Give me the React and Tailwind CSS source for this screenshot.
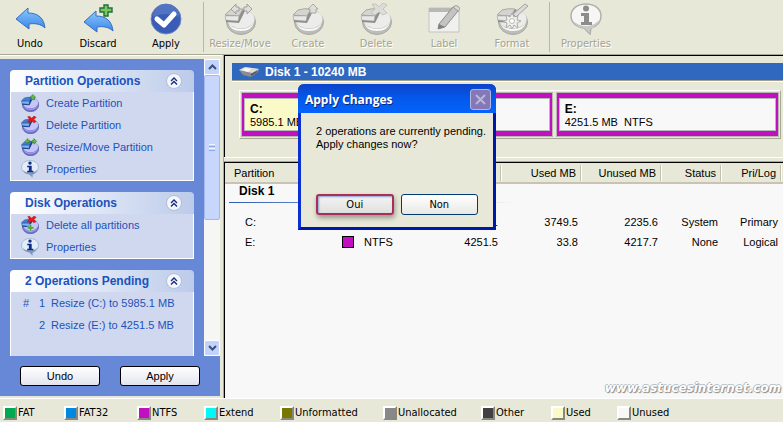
import React, { useState } from "react";

const PieIcon = ({ size, muted, children }) => {
  const c = muted
    ? { top: "#ececea", side: "#bcbcb8", slice: "#d4d4d0", band: "#e8e8e6", edge: "#8e8e8a", line: "#a8a8a4", shine: "#fafaf8" }
    : { top: "#c4c6f8", side: "#7472d0", slice: "#3484dc", band: "#74b8f4", edge: "#203c8c", line: "#4a4a90", shine: "#a8a8f0" };
  return (
    <svg width={size} height={size} viewBox="0 0 32 32" aria-hidden="true">
      <ellipse cx="17" cy="19" rx="14.5" ry="12.5" fill={c.side} stroke={c.line} />
      <ellipse cx="17" cy="16" rx="13.5" ry="9.500" fill={c.top} />
      <path d="M4 19 Q7 26 17 26 Q27 26 30 19 Q28 28 17 28 Q6 28 4 19 Z" fill={c.shine} />
      <path d="M1 13 L2 19 L15 20 L21 8 L19 6 Z" fill={c.edge} />
      <path d="M1 12 L6 7 Q12 5 19 6 L15 13 Z" fill={c.slice} stroke={c.line} />
      <path d="M1 13 L15 13 L14 18 L2 17 Z" fill={c.band} stroke={c.line} strokeWidth="0.5" />
      {children}
    </svg>
  );
};

const InfoIcon = ({ size, muted }) => (
  <svg width={size} height={size} viewBox="0 0 32 32" aria-hidden="true">
    <path
      d="M16 1 C25 1 31 6 31 13 C31 19 27 23 21 25 L20 31 L14 25 C6 24 1 19 1 13 C1 6 7 1 16 1 Z"
      fill={muted ? "#f6f6f4" : "#e2edf8"}
      stroke={muted ? "#b0b0ac" : "#9cb4d0"}
      strokeWidth="1.5"
    />
    <path d="M3 18 Q9 23 16 23 Q24 23 29 17 Q26 25 20 26 L20 30 L14 25 Q6 24 3 18 Z" fill={muted ? "#c8c8c4" : "#7c98bc"} />
    <circle cx="16" cy="5.500" r="3" fill={muted ? "#8c8c8a" : "#102c84"} />
    <path d="M11 10 H19 V19 H22 V22 H11 V19 H14 V13 H11 Z" fill={muted ? "#8c8c8a" : "#102c84"} />
  </svg>
);

const Cross = ({ muted }) => (
  <path
    d="M12 1 L16 1 L19 4 L23 0 L27 2 L23 6 L27 10 L23 12 L19 9 L15 12 L11 10 L15 6 Z"
    fill={muted ? "#dcdcd8" : "#e81818"}
    stroke={muted ? "#bcbcb8" : "#b01010"}
    strokeWidth="0.8"
  />
);

const UpArrow = ({ muted }) => (
  <path d="M21 1 L26 6 H24 V10 H18 V6 H16 Z" fill={muted ? "#dededa" : "#62b848"} stroke={muted ? "#a8a8a4" : "#2c7020"} />
);

const SideArrows = ({ muted }) => (
  <g fill={muted ? "#dededa" : "#62b848"} stroke={muted ? "#a0a09c" : "#2c7020"}>
    <path d="M7 6 L12 1 V4 H15 V8 H12 V11 Z" />
    <path d="M28 6 L23 1 V4 H20 V8 H23 V11 Z" />
  </g>
);

const BackArrow = ({ plus }) => (
  <svg width="32" height="32" viewBox="0 0 32 32" aria-hidden="true">
    <defs>
      <linearGradient id="back" x1="0" y1="0" x2="0" y2="1">
        <stop offset="0" stopColor="#8cc8fc" />
        <stop offset="1" stopColor="#3a86e8" />
      </linearGradient>
    </defs>
    <path
      d="M2 16 L14 5 V10 C24 10 30 15 31 25 C27 21 21 20 15 21 V26 Z"
      fill="url(#back)"
      stroke="#3a6cc4"
      strokeLinejoin="round"
      transform={plus ? "translate(0 3)" : undefined}
    />
    {plus && (
      <path d="M22 2 H26 V5 H30 V9 H26 V13 H22 V9 H18 V5 H22 Z" fill="#7cc858" stroke="#1c7040" strokeWidth="1.4" />
    )}
  </svg>
);

const CheckIcon = () => (
  <svg width="32" height="32" viewBox="0 0 32 32" aria-hidden="true">
    <circle cx="16" cy="16" r="15" fill="#3a5cb4" stroke="#7088c8" />
    <path d="M3 14 A13 13 0 0 1 29 14 Q16 8 3 14 Z" fill="#5272c4" />
    <path d="M7 16 L14 22 L24 11" fill="none" stroke="#fff" strokeWidth="5" strokeLinecap="round" strokeLinejoin="round" />
  </svg>
);

const LabelIcon = () => (
  <svg width="32" height="32" viewBox="0 0 32 32" aria-hidden="true">
    <path d="M1 5 H31 V29 H1 Z" fill="#f0f0ee" stroke="#c4c4c0" />
    <path d="M1 5 H31 V9 H1 Z" fill="#b8b8b4" />
    <path d="M11 21 L25 4 L30 8 L17 24 L10 26 Z" fill="#c4c4c0" stroke="#8c8c88" />
    <path d="M25 4 Q28 1 31 4 Q33 7 30 8 Z" fill="#d8d8d4" stroke="#a4a4a0" />
    <path d="M11 21 L17 24 L10 26 Z" fill="#80807c" />
  </svg>
);

const FormatIcon = () => (
  <PieIcon size={32} muted>
    <path
      d="M16 10 L18 14 L22 12 L21 17 L25 18 L21 20 L22 25 L18 22 L16 26 L14 22 L10 25 L11 20 L7 18 L11 17 L10 12 L14 14 Z"
      fill="#f0f0ec"
      stroke="#acaca8"
    />
    <circle cx="16" cy="18" r="2.500" fill="#fff" stroke="#b8b8b4" />
    <path d="M17 11 L29 1 L32 3 L20 14 Z" fill="#dadad6" stroke="#a4a4a0" />
  </PieIcon>
);

const DriveIcon = () => (
  <svg width="20" height="12" viewBox="0 0 20 12" aria-hidden="true">
    <path d="M0 4 L6 1 L20 3 L19 6 L12 11 L4 9 Z" fill="#8c8c8c" />
    <path d="M0 4 L6 1 L20 3 L13 7 Z" fill="#dcdcdc" />
    <path d="M3 4 L7 2 L12 3 L9 6 Z" fill="#f8f8f8" />
    <path d="M12 8 L18 5 V6 L12 10 Z" fill="#505050" />
  </svg>
);

const ToolButton = ({ icon, label, disabled }) => (
  <button
    type="button"
    disabled={disabled}
    className={`flex w-17 shrink-0 flex-col items-center pt-[3px] font-['DejaVu_Sans_Condensed','DejaVu_Sans',sans-serif] text-[11px] leading-[18px] ${
      disabled ? "text-[#a4a490] [text-shadow:1px_1px_0_#fff]" : "text-black"
    }`}
  >
    {icon}
    <span className="whitespace-nowrap">{label}</span>
  </button>
);

const ToolSeparator = () => (
  <div className="flex w-1.5 shrink-0 justify-center py-0.5">
    <div className="w-px bg-[#b8b8a6]" />
  </div>
);

const TaskPanel = ({ title, children, grow }) => {
  const [open, setOpen] = useState(true);
  return (
    <section className={`shrink-0 ${grow ? "min-h-32" : ""}`}>
      <header className="flex h-[22px] items-center justify-between rounded-t-sm bg-linear-to-r from-white to-[#bccbea] pr-3 pl-[15px]">
        <h2 className="text-[12px] font-bold whitespace-nowrap text-[#1c52bc]">{title}</h2>
        <button
          type="button"
          aria-label={`Toggle ${title}`}
          aria-expanded={open}
          onClick={() => setOpen(!open)}
          className="flex size-4 items-center justify-center rounded-full border border-[#b0bedc] bg-[#f4f6fb]"
        >
          <svg width="8" height="8" viewBox="0 0 8 8" fill="none" stroke="#102880" strokeWidth="1.3">
            <path d="M1 4 L4 1 L7 4 M1 7.500 L4 4.500 L7 7.500" />
          </svg>
        </button>
      </header>
      {open && <div className={`border border-t-0 border-white bg-[#d0d8ef] ${grow ? "min-h-28" : ""}`}>{children}</div>}
    </section>
  );
};

const TaskLink = ({ icon, label }) => (
  <li>
    <a href="#" className="flex h-[22px] items-center gap-[7px] pl-2.5 text-[#1c52bc]">
      {icon}
      {label}
    </a>
  </li>
);

const PendingRow = ({ mark, number, label }) => (
  <li className="flex h-[22px] items-center pl-3 text-[#1c52bc]">
    <span className="w-4">{mark}</span>
    <span className="w-3">{number}</span>
    {label}
  </li>
);

const ScrollButton = ({ label, path }) => (
  <button
    type="button"
    aria-label={label}
    className="flex h-4 w-full shrink-0 items-center justify-center rounded-xs border border-white bg-[#c2d3fc]"
  >
    <svg width="9" height="6" viewBox="0 0 9 6" fill="none" stroke="#3c5078" strokeWidth="2">
      <path d={path} />
    </svg>
  </button>
);

const SideButton = ({ label }) => (
  <button
    type="button"
    className="h-5 w-20 rounded-[3px] border border-black bg-linear-to-b from-white to-[#e4e4ee] text-[11px] leading-4 text-black"
  >
    {label}
  </button>
);

const PartitionBox = ({ letter, details, className, used }) => (
  <div className={`border border-[#b8b8b0] ${className}`}>
    <div className="h-[43px] border-2 border-y-[5px] border-[#c010c0]">
      <div className="flex h-full border border-[#b8b8b8] bg-[#f8f8f8]">
        <div className={`px-[5px] pt-1 leading-[13px] whitespace-nowrap ${used ? "w-2/3 bg-[#fafac8]" : ""}`}>
          <div className="text-[12px] font-bold">{letter}</div>
          <div className="text-[11px]">{details}</div>
        </div>
      </div>
    </div>
  </div>
);

const columns = ["Partition", "Type", "Size MB", "Used MB", "Unused MB", "Status", "Pri/Log"];

const partitions = [
  { name: "C:", type: "NTFS", values: ["5985.1", "3749.5", "2235.6", "System", "Primary"] },
  { name: "E:", type: "NTFS", values: ["4251.5", "33.8", "4217.7", "None", "Logical"] },
];

const PartitionTable = () => (
  <table className="w-full table-fixed border-collapse text-[11px] leading-4">
    <colgroup>
      <col className="w-[110px]" />
      <col className="w-[87px]" />
      <col className="w-20" />
      <col className="w-20" />
      <col className="w-20" />
      <col className="w-15" />
      <col className="w-15" />
      <col />
    </colgroup>
    <thead>
      <tr className="h-5 border-b-2 border-[#cbc3b2] bg-[#e8e8d8]">
        {columns.map((name, i) => (
          <th key={name} className="p-0 font-normal">
            <div
              className={`mr-px border-r border-[#c0c0b0] whitespace-nowrap shadow-[1px_0_0_#fff] ${
                i < 2 ? "pl-[9px] text-left" : "pr-1 text-right"
              }`}
            >
              {name}
            </div>
          </th>
        ))}
        <th />
      </tr>
    </thead>
    <tbody>
      <tr>
        <th colSpan={8} className="p-0 pb-[9px] pl-1 text-left">
          <div className="pb-1 pl-2.5 text-[12px] leading-[14px]">Disk 1</div>
          <div className="h-px w-72 bg-linear-to-r from-[#2c5cb0] to-[#f8f8f8]" />
        </th>
      </tr>
      {partitions.map((p) => (
        <tr key={p.name} className="h-5">
          <td className="p-0 pl-5">{p.name}</td>
          <td className="p-0 pl-[7px]">
            <span className="flex items-center gap-2.5">
              <span className="size-3 border border-black bg-[#c010c0]" />
              {p.type}
            </span>
          </td>
          {p.values.map((value, i) => (
            <td key={i} className="p-0 pr-1 text-right">
              {value}
            </td>
          ))}
          <td />
        </tr>
      ))}
    </tbody>
  </table>
);

const legend = [
  { label: "FAT", color: "bg-[#00a850]" },
  { label: "FAT32", color: "bg-[#0088e0]" },
  { label: "NTFS", color: "bg-[#c010c0]" },
  { label: "Extend", color: "bg-[#00f8f8]" },
  { label: "Unformatted", color: "bg-[#787800]" },
  { label: "Unallocated", color: "bg-[#888888]" },
  { label: "Other", color: "bg-[#404040]" },
  { label: "Used", color: "bg-[#fafac8]" },
  { label: "Unused", color: "bg-[#f8f8f8]" },
];

const Legend = () => (
  <ul className="grid h-6 shrink-0 grid-cols-[61px_73px_67px_76px_103px_98px_70px_66px_1fr] items-center border-t border-white bg-[#e8e8d8] pt-1 pl-[3px] font-['DejaVu_Sans_Condensed','DejaVu_Sans',sans-serif] text-[11px] leading-4">
    {legend.map((item) => (
      <li key={item.label} className="flex items-center gap-px whitespace-nowrap">
        <span
          className={`size-3.5 shrink-0 border-2 border-t-white border-r-[#888880] border-b-[#888880] border-l-white ${item.color}`}
        />
        {item.label}
      </li>
    ))}
  </ul>
);

const ApplyDialog = ({ onClose }) => (
  <div
    role="dialog"
    aria-labelledby="dialog-title"
    className="absolute top-[84px] left-[298px] flex w-[198px] flex-col rounded-t-md border-[3px] border-t-0 border-[#0a30d0] border-r-[#0018a8] border-b-[#0018a8] bg-[#e8e8d8]"
  >
    <div className="-mx-[3px] flex h-[29px] items-center justify-between rounded-t-md bg-linear-to-b from-[#0c44c8] via-[#0458ec] to-[#0464fc] pt-0.5 pr-[5px] pl-[7px]">
      <h1 id="dialog-title" className="font-['Open_Sans',sans-serif] text-[12px] font-bold text-white [text-shadow:1px_1px_0_#0a2a80]">
        Apply Changes
      </h1>
      <button
        type="button"
        aria-label="Close"
        onClick={onClose}
        className="flex size-[21px] items-center justify-center rounded-[3px] border border-[#b4b8e0] bg-[#8478b8]"
      >
        <svg width="11" height="11" viewBox="0 0 11 11" stroke="#b8b8dc" strokeWidth="2">
          <path d="M1 1 L10 10 M10 1 L1 10" />
        </svg>
      </button>
    </div>
    <p className="px-[15px] pt-3 pb-[43px] text-[11px] leading-[13px] whitespace-nowrap">
      2 operations are currently pending.
      <br />
      Apply changes now?
    </p>
    <div className="flex gap-[7px] px-[15px] pb-3 font-['DejaVu_Sans_Condensed','DejaVu_Sans',sans-serif] text-[11px]">
      <button
        type="button"
        onClick={onClose}
        className="h-[21px] w-[78px] rounded-[3px] border-2 border-[#a83058] bg-linear-to-b from-[#f4f4f2] to-[#e0e0de] leading-[18px] shadow-[1px_3px_5px_#00000059,inset_1px_1px_2px_#8ca0d0]"
      >
        Oui
      </button>
      <button
        type="button"
        onClick={onClose}
        className="h-[21px] w-[78px] rounded-[3px] border border-[#003c74] bg-linear-to-b from-white to-[#e8e8e4] leading-[18px]"
      >
        Non
      </button>
    </div>
  </div>
);

const App = () => {
  const [dialogOpen, setDialogOpen] = useState(true);

  return (
    <div className="relative flex h-screen flex-col overflow-hidden bg-[#e8e8d8] font-['Liberation_Sans',Arial,sans-serif] text-[11px] text-black">
      <nav className="-ml-1 flex h-[54px] shrink-0">
        <ToolButton icon={<BackArrow />} label="Undo" />
        <ToolButton icon={<BackArrow plus />} label="Discard" />
        <ToolButton icon={<CheckIcon />} label="Apply" />
        <ToolSeparator />
        <ToolButton disabled label="Resize/Move" icon={<PieIcon size={32} muted><SideArrows muted /></PieIcon>} />
        <ToolButton disabled label="Create" icon={<PieIcon size={32} muted><UpArrow muted /></PieIcon>} />
        <ToolButton disabled label="Delete" icon={<PieIcon size={32} muted><Cross muted /></PieIcon>} />
        <ToolButton disabled label="Label" icon={<LabelIcon />} />
        <ToolButton disabled label="Format" icon={<FormatIcon />} />
        <ToolSeparator />
        <ToolButton disabled label="Properties" icon={<InfoIcon size={32} muted />} />
      </nav>

      <div className="flex min-h-0 flex-1 border-t border-[#a8a898]">
        <aside className="flex w-[223px] shrink-0 flex-col border-t border-r-[3px] border-b-2 border-[#e8e8d8] border-t-white pt-[3px]">
          <div className="flex min-h-0 flex-1 bg-[#6787d7]">
            <div className="flex min-w-0 flex-1 flex-col gap-[11px] overflow-hidden px-2.5 pt-[11px]">
              <TaskPanel title="Partition Operations">
                <ul>
                  <TaskLink label="Create Partition" icon={<PieIcon size={18}><UpArrow /></PieIcon>} />
                  <TaskLink label="Delete Partition" icon={<PieIcon size={18}><Cross /></PieIcon>} />
                  <TaskLink label="Resize/Move Partition" icon={<PieIcon size={18}><SideArrows /></PieIcon>} />
                  <TaskLink label="Properties" icon={<InfoIcon size={18} />} />
                </ul>
              </TaskPanel>
              <TaskPanel title="Disk Operations">
                <ul>
                  <TaskLink
                    label="Delete all partitions"
                    icon={
                      <PieIcon size={18}>
                        <Cross />
                        <path d="M15 15 H19 V19 H23 V23 H19 V27 H15 V23 H11 V19 H15 Z" fill="#48a838" stroke="#d8e8e0" strokeWidth="0.8" />
                      </PieIcon>
                    }
                  />
                  <TaskLink label="Properties" icon={<InfoIcon size={18} />} />
                </ul>
              </TaskPanel>
              <TaskPanel title="2 Operations Pending" grow>
                <ul>
                  <PendingRow mark="#" number="1" label="Resize (C:) to 5985.1 MB" />
                  <PendingRow mark="" number="2" label="Resize (E:) to 4251.5 MB" />
                </ul>
              </TaskPanel>
            </div>
            <div className="flex w-4 shrink-0 flex-col bg-[#f6f6f4]">
              <ScrollButton label="Scroll up" path="M1 5 L4.500 1.500 L8 5" />
              <div className="flex flex-1 flex-col">
                <div className="flex h-[145px] flex-col items-center justify-center gap-px rounded-xs border border-[#a4b8ec] bg-[#c6d6fc]">
                  <span className="h-px w-1.5 bg-[#f0f4ff]" />
                  <span className="h-px w-1.5 bg-[#8ca8e8]" />
                  <span className="h-px w-1.5 bg-[#f0f4ff]" />
                  <span className="h-px w-1.5 bg-[#8ca8e8]" />
                </div>
              </div>
              <ScrollButton label="Scroll down" path="M1 1 L4.500 4.500 L8 1" />
            </div>
          </div>
          <div className="flex h-10 shrink-0 items-center justify-center gap-5 bg-[#6787d7]">
            <SideButton label="Undo" />
            <SideButton label="Apply" />
          </div>
        </aside>

        <main className="flex min-w-0 flex-1 flex-col border-l border-[#a8a898]">
          <section className="h-[102px] shrink-0 border-t border-l border-black pt-[7px] pl-[7px]">
            <header className="flex h-[18px] items-center gap-1.5 border-b border-[#a0a090] bg-[#3068c0] pl-[7px] text-[12px] font-bold text-white shadow-[0_1px_0_#fff]">
              <DriveIcon />
              <h2>Disk 1 - 10240 MB</h2>
            </header>
            <div className="mt-[9px] mr-0.5 ml-[7px] flex gap-[3px] border border-t-white border-r-[#a8a898] border-b-[#a8a898] border-l-white p-px">
              <PartitionBox letter="C:" details={"5985.1 MB \u00a0NTFS"} used className="flex-[7]" />
              <PartitionBox letter="E:" details={"4251.5 MB \u00a0NTFS"} className="flex-[5]" />
            </div>
          </section>
          <div className="h-[5px] shrink-0 border-t border-b border-t-white border-b-[#a8a898]" />
          <section className="min-h-0 flex-1 overflow-hidden border-t border-l border-black bg-[#f8f8f8]">
            <PartitionTable />
          </section>
        </main>
      </div>

      <Legend />

      <div className="absolute right-0.5 bottom-[26px] font-['DejaVu_Sans',sans-serif] text-[12px] leading-4 font-bold text-white italic [text-shadow:1px_1px_1px_#8c8680,-1px_0_0_#a4bccc,0_-1px_0_#b4c4d0]">
        www.astucesinternet.com
      </div>

      {dialogOpen && <ApplyDialog onClose={() => setDialogOpen(false)} />}
    </div>
  );
};

export default App;
